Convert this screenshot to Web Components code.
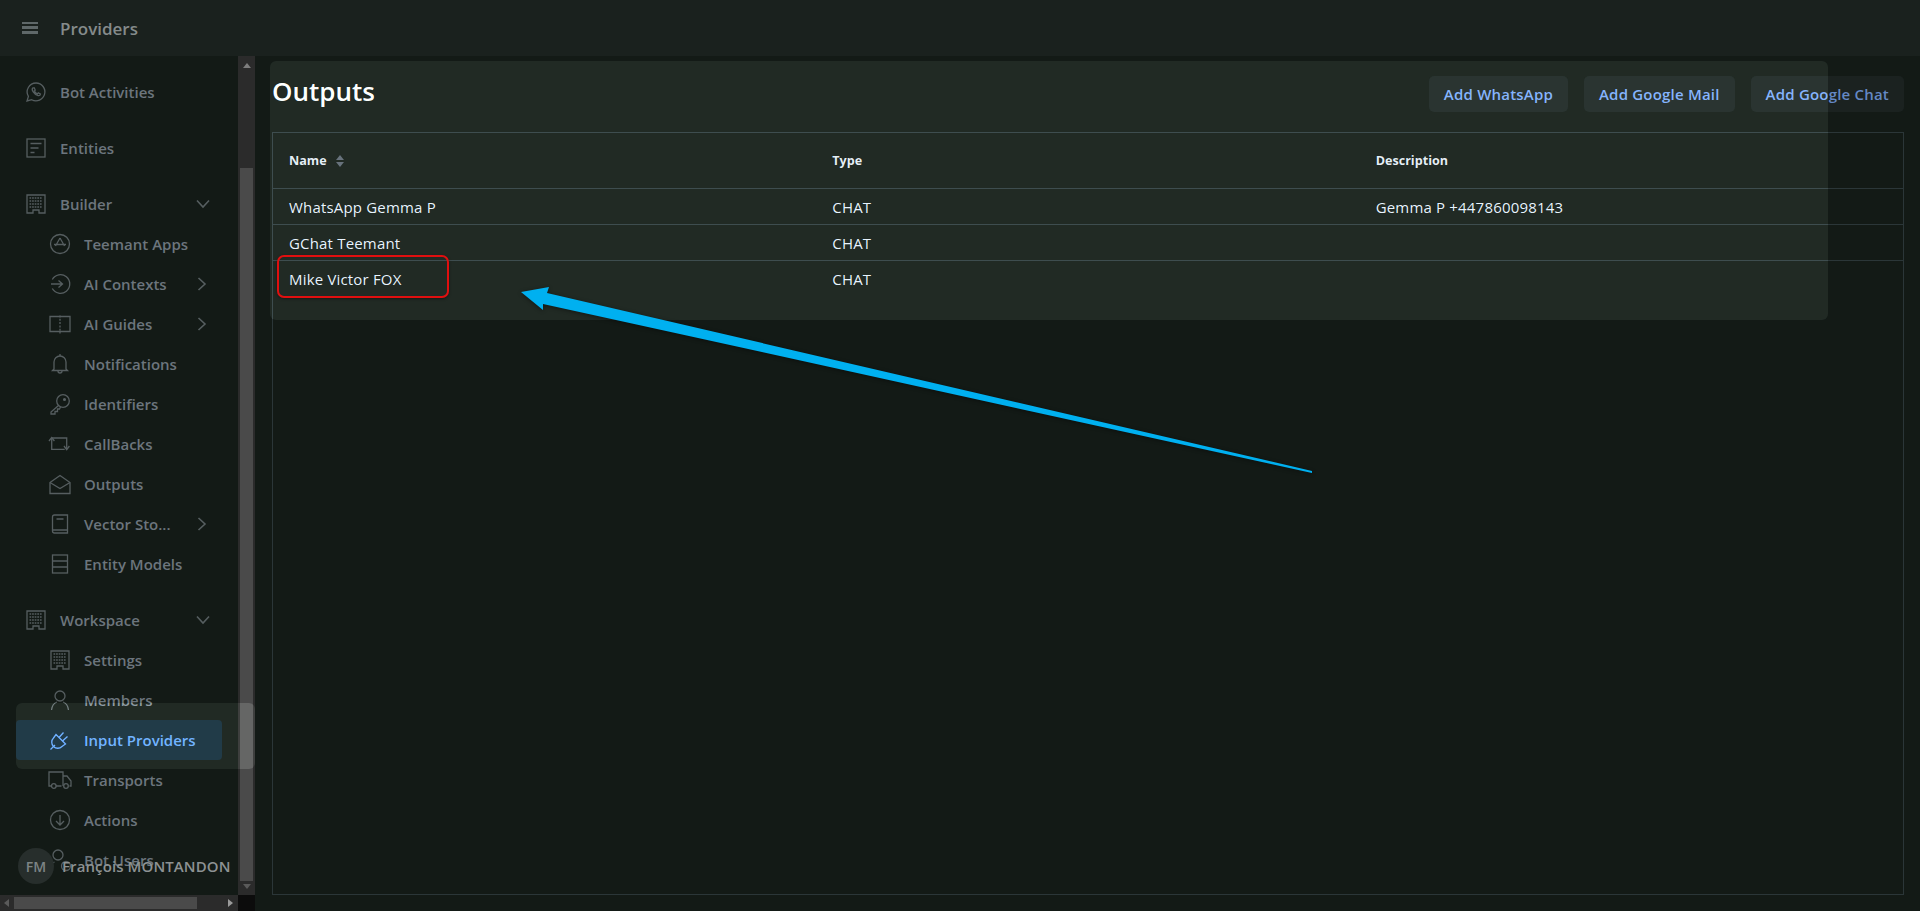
<!DOCTYPE html>
<html>
<head>
<meta charset="utf-8">
<title>Providers</title>
<style>
  html, body { margin: 0; height: 100%; background: #131a16; overflow: hidden; }
  body { font-family: "Open Sans", "Noto Sans", sans-serif; }
</style>
</head>
<body>
<app-shell>
  <top-bar slot="top" label="Providers"></top-bar>
  <side-nav slot="side">
    <nav-item icon="whatsapp" gap>Bot Activities</nav-item>
    <nav-item icon="entities" gap>Entities</nav-item>
    <nav-item icon="building" chevron="down">Builder</nav-item>
    <nav-item icon="apps" sub>Teemant Apps</nav-item>
    <nav-item icon="context" sub chevron="right">AI Contexts</nav-item>
    <nav-item icon="guide" sub chevron="right">AI Guides</nav-item>
    <nav-item icon="bell" sub>Notifications</nav-item>
    <nav-item icon="key" sub>Identifiers</nav-item>
    <nav-item icon="repeat" sub>CallBacks</nav-item>
    <nav-item icon="mail" sub>Outputs</nav-item>
    <nav-item icon="book" sub chevron="right">Vector Sto...</nav-item>
    <nav-item icon="rows" sub gap>Entity Models</nav-item>
    <nav-item icon="building" chevron="down">Workspace</nav-item>
    <nav-item icon="building" sub>Settings</nav-item>
    <nav-item icon="user" sub>Members</nav-item>
    <nav-item icon="plug" sub active>Input Providers</nav-item>
    <nav-item icon="truck" sub>Transports</nav-item>
    <nav-item icon="action" sub>Actions</nav-item>
    <nav-item icon="users" sub>Bot Users</nav-item>
  </side-nav>
  <outputs-page slot="main">
    <action-button>Add WhatsApp</action-button>
    <action-button>Add Google Mail</action-button>
    <action-button>Add Google Chat</action-button>
    <output-row slot="rows" name="WhatsApp Gemma P" type="CHAT" desc="Gemma P +447860098143"></output-row>
    <output-row slot="rows" name="GChat Teemant" type="CHAT"></output-row>
    <output-row slot="rows" name="Mike Victor FOX" type="CHAT"></output-row>
  </outputs-page>
</app-shell>
<spot-light style="left:270px;top:61px;width:1558px;height:259px"></spot-light>
<spot-light style="left:16px;top:703px;width:239px;height:66px"></spot-light>
<user-chip initials="FM" name="François MONTANDON"></user-chip>
<annot-layer></annot-layer>

<script>
const GRID = 'M5.500 6h13M5.500 9h13M5.500 12h13M5.500 15h13';
const ICONS = {
  whatsapp: '<path d="M12.100 3a8.900 8.900 0 0 0-7.700 13.400L3 21l4.700-1.300A8.900 8.900 0 1 0 12.100 3z"/><path d="M9 7.800c-.9.700-1 2.300.2 4.100 1.300 2 3 3.400 4.900 3.700 1.200.2 2.200-.5 2.400-1.600l-2.200-1.100-1 1c-1.200-.5-2.300-1.500-2.900-2.800l.8-1-.9-2.300H9z"/>',
  entities: '<rect x="3" y="3" width="18" height="18"/><path d="M6.500 7.500h11M6.500 12h8M6.500 16.500h4"/>',
  building: '<path d="M3 3h18v18h-6v-3H9v3H3z"/><path stroke-width="1.500" stroke-dasharray="1.700 .9" d="' + GRID + '"/>',
  apps: '<circle cx="12" cy="12" r="9.500"/><path d="M12 6l-4.500 8M12 6l4.500 8M6 12.500h12"/>',
  context: '<path d="M4.300 7.500a9.300 9.300 0 1 1 0 9"/><path d="M3 12h11.500M10.500 8.500L14.500 12l-4 3.500"/>',
  guide: '<path d="M2 4.500h20v15H2z"/><path stroke-dasharray="2 1.300" d="M12 3.500v18"/>',
  bell: '<path d="M6 17V10a6 6 0 0 1 12 0v7l1.500 1.500h-15z"/><path d="M12 2V4M10 19a2 2 0 0 0 4 0"/>',
  key: '<circle cx="15" cy="9" r="6.300"/><circle cx="16.500" cy="7.500" r=".9" fill="currentColor"/><path d="M10.500 13.500L3 20v2h4v-2.500h2.500V17h2l1-2"/>',
  repeat: '<path d="M3.700 6v11.300h13M3.700 6h15v11.300"/><path d="M1 9l2.700-3.500L6.400 9M16 14l2.700 3.700 2.700-3.700"/>',
  mail: '<path d="M2 10.500L12 3.500l10 7V21.500H2z"/><path d="M2 10.500l10 6 10-6"/>',
  book: '<path d="M4.500 5a2 2 0 0 1 2-2h13v18h-13a2 2 0 0 1-2-2z"/><path d="M4.500 18h15M8.500 7h7"/>',
  rows: '<rect x="4.500" y="3" width="15" height="18"/><path d="M4.500 9h15M4.500 15h15"/>',
  user: '<circle cx="12" cy="8" r="5"/><path d="M3.500 22c.5-4 2.500-7 5.500-8M20.500 22c-.5-4-2.500-7-5.500-8"/>',
  plug: '<path d="M2.500 21.500L7 17"/><path d="M8 6.500L17.500 16l-3.500 2.500a5 5 0 0 1-8.500-8.500z"/><path d="M11 9.500L15.500 4.500M14.500 13L19.500 8.500"/>',
  truck: '<path d="M13.500 18H8M3.500 18H1V4h14v14M15 8h4l4 5v5h-1.500"/><circle cx="5.800" cy="18" r="2.300"/><circle cx="18" cy="18" r="2.300"/>',
  action: '<circle cx="12" cy="12" r="9.500"/><path d="M12 7v10M8 13l4 4 4-4"/>',
  users: '<circle cx="10" cy="7" r="5"/><path d="M1 22c.5-4 2.500-7 5.500-8"/><circle cx="18" cy="18" r="4.500"/>'
};

class AppShell extends HTMLElement {
  constructor() {
    super();
    this.attachShadow({ mode: 'open' }).innerHTML = `
      <style>
        :host { display: grid; grid-template-rows: 56px 1fr; grid-template-columns: 255px 1fr; height: 100vh; background: #131a16; }
        .top { grid-column: 1 / 3; display: block; }
      </style>
      <div class="top"><slot name="top"></slot></div>
      <slot name="side"></slot>
      <slot name="main"></slot>`;
  }
}

class TopBar extends HTMLElement {
  constructor() {
    super();
    this.attachShadow({ mode: 'open' }).innerHTML = `
      <style>
        :host { display: flex; align-items: center; height: 56px; background: #1a211e; padding-left: 22px; gap: 22px; box-sizing: border-box; }
        .burger { width: 16px; height: 12px; margin-top: -1px; display: flex; flex-direction: column; justify-content: space-between; }
        .burger i { display: block; height: 2.500px; background: #5f6869; }
        span { font-size: 17px; font-weight: 600; color: #858b8b; }
      </style>
      <div class="burger"><i></i><i></i><i></i></div>
      <span>${this.getAttribute('label')}</span>`;
  }
}

class SideNav extends HTMLElement {
  constructor() {
    super();
    this.attachShadow({ mode: 'open' }).innerHTML = `
      <style>
        :host { display: grid; grid-template-columns: 238px 17px; grid-template-rows: 839px 16px; height: 855px; overflow: hidden; background: #131a16; }
        .list { overflow: hidden; padding: 16px 16px 0; box-sizing: border-box; }
        .vbar { background: #2b2b2b; display: flex; flex-direction: column; align-items: center; }
        .vbar .up { margin-top: 7px; width: 0; border: 4px solid transparent; border-top: 0; border-bottom: 5px solid #7d7d7d; }
        .vbar .down { margin-bottom: 6px; width: 0; border: 4px solid transparent; border-bottom: 0; border-top: 5px solid #5a5a5a; }
        .vbar .thumb { width: 13px; flex: 1; margin: 100px 0 3px; background: #4a4a4a; }
        .hbar { background: #2b2b2b; display: flex; align-items: center; padding: 0 4px; gap: 5px; }
        .hbar .lt { border: 4px solid transparent; border-left: 0; border-right: 5px solid #5a5a5a; }
        .hbar .th { width: 183px; height: 12px; background: #4a4a4a; }
        .hbar .sp { flex: 1; }
        .hbar .rt { border: 4px solid transparent; border-right: 0; border-left: 5px solid #9a9a9a; margin-right: 1px; }
        .corner { background: #0c0c0c; }
      </style>
      <div class="list"><slot></slot></div>
      <div class="vbar"><div class="up"></div><div class="thumb"></div><div class="down"></div></div>
      <div class="hbar"><div class="lt"></div><div class="th"></div><div class="sp"></div><div class="rt"></div></div>
      <div class="corner"></div>`;
  }
}

class NavItem extends HTMLElement {
  constructor() {
    super();
    const sub = this.hasAttribute('sub');
    const chev = this.getAttribute('chevron');
    const chevPath = chev === 'down' ? 'M6 8.500l6 6.500 6-6.500' : 'M8.500 6l6.500 6-6.500 6';
    this.attachShadow({ mode: 'open' }).innerHTML = `
      <style>
        :host { display: flex; align-items: center; width: 206px; height: 40px; box-sizing: border-box; color: #6c757d; font-size: 15px; font-weight: 600; border-radius: 4px; white-space: nowrap; }
        :host([gap]) { margin-bottom: 16px; }
        :host([active]) { background: #142833; color: #5488cc; }
        .ico { flex: none; width: 24px; height: 24px; margin-left: ${sub ? 32 : 8}px; margin-right: 12px; fill: none; stroke: #565e60; stroke-width: 1.300; }
        :host([active]) .ico { stroke: #5488cc; }
        .lbl { flex: 1; }
        .chev { width: 24px; height: 24px; margin-right: ${sub ? 8 : 7}px; fill: none; stroke: #565e60; stroke-width: 1.600; }
      </style>
      <svg class="ico" viewBox="0 0 24 24">${ICONS[this.getAttribute('icon')] || ''}</svg>
      <span class="lbl"><slot></slot></span>
      ${chev ? `<svg class="chev" viewBox="0 0 24 24"><path d="${chevPath}"/></svg>` : ''}`;
  }
}

class ActionButton extends HTMLElement {
  constructor() {
    super();
    this.attachShadow({ mode: 'open' }).innerHTML = `
      <style>
        :host { display: inline-flex; align-items: center; height: 36px; padding: 0 15px; border-radius: 5px; background: #1b2220; color: #6488c4; font-size: 15px; font-weight: 600; letter-spacing: .2px; white-space: nowrap; }
      </style>
      <slot></slot>`;
  }
}

class OutputRow extends HTMLElement {
  constructor() {
    super();
    const t = (a) => this.getAttribute(a) || '';
    this.attachShadow({ mode: 'open' }).innerHTML = `
      <style>
        :host { display: grid; grid-template-columns: repeat(3, 1fr); align-items: center; height: 36px; box-sizing: border-box; border-top: 1px solid #2b3638; color: #b4bcc4; font-size: 15px; letter-spacing: .18px; }
        span { padding-left: 16px; }
      </style>
      <span>${t('name')}</span><span>${t('type')}</span><span>${t('desc')}</span>`;
  }
}

class OutputsPage extends HTMLElement {
  constructor() {
    super();
    this.attachShadow({ mode: 'open' }).innerHTML = `
      <style>
        :host { display: flex; flex-direction: column; padding: 20px 16px 16px 17px; height: 855px; box-sizing: border-box; }
        header { display: flex; align-items: center; height: 36px; gap: 16px; }
        h1 { flex: 1; margin: -6px 0 0; font-size: 26px; font-weight: 600; color: #c4c8c8; }
        .table { flex: 1; margin-top: 20px; border: 1px solid #2b3638; }
        .head { display: grid; grid-template-columns: repeat(3, 1fr); align-items: center; height: 55px; color: #b0b7be; font-size: 12.600px; font-weight: 700; }
        .head span { padding-left: 16px; display: flex; align-items: center; gap: 9px; }
        .sort { width: 8px; height: 12px; fill: #4c545c; }
      </style>
      <header><h1>Outputs</h1><slot></slot></header>
      <div class="table">
        <div class="head">
          <span>Name <svg class="sort" viewBox="0 0 8 12"><path d="M4 0l4 5H0zM4 12L0 7h8z"/></svg></span>
          <span>Type</span><span>Description</span>
        </div>
        <slot name="rows"></slot>
      </div>`;
  }
}

class SpotLight extends HTMLElement {
  constructor() {
    super();
    this.attachShadow({ mode: 'open' }).innerHTML = `
      <style>
        :host { position: absolute; display: block; border-radius: 6px; background: rgba(240, 255, 235, .04); backdrop-filter: brightness(1.3); pointer-events: none; }
      </style>`;
  }
}

class UserChip extends HTMLElement {
  constructor() {
    super();
    this.attachShadow({ mode: 'open' }).innerHTML = `
      <style>
        :host { position: absolute; left: 18px; top: 848px; display: flex; align-items: center; gap: 8px; white-space: nowrap; }
        .av { width: 36px; height: 36px; border-radius: 50%; background: #272e2c; color: #7d8485; font-size: 14px; font-weight: 600; display: flex; align-items: center; justify-content: center; }
        .nm { font-size: 15px; font-weight: 600; color: #8d9293; letter-spacing: .1px; }
      </style>
      <div class="av">${this.getAttribute('initials')}</div>
      <div class="nm">${this.getAttribute('name')}</div>`;
  }
}

class AnnotLayer extends HTMLElement {
  constructor() {
    super();
    this.attachShadow({ mode: 'open' }).innerHTML = `
      <style>
        :host { position: absolute; left: 0; top: 0; width: 1920px; height: 911px; display: block; pointer-events: none; }
        .box { position: absolute; left: 277px; top: 255px; width: 168px; height: 39px; border: 2px solid #e00f0f; border-radius: 7px; box-shadow: 0 1px 3px rgba(0,0,0,.4); }
        svg { position: absolute; left: 0; top: 0; filter: drop-shadow(0 1px 2px rgba(0,0,0,.45)); }
      </style>
      <div class="box"></div>
      <svg width="1920" height="911" viewBox="0 0 1920 911">
        <path fill="#00b0f0" d="M521 292L549 287L547 293L1312 471L1312 473L543 304L543 310z"/>
      </svg>`;
  }
}

customElements.define('app-shell', AppShell);
customElements.define('top-bar', TopBar);
customElements.define('side-nav', SideNav);
customElements.define('nav-item', NavItem);
customElements.define('action-button', ActionButton);
customElements.define('output-row', OutputRow);
customElements.define('outputs-page', OutputsPage);
customElements.define('spot-light', SpotLight);
customElements.define('user-chip', UserChip);
customElements.define('annot-layer', AnnotLayer);
</script>
</body>
</html>
